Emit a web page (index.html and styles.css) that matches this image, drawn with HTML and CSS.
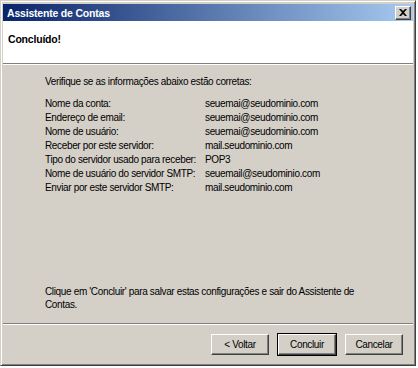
FILE: index.html
```html
<!DOCTYPE html>
<html lang="pt">
<head>
  <meta charset="UTF-8" />
  <title>Assistente de Contas</title>
  <link rel="stylesheet" href="styles.css">
</head>
<body>
  <div class="window">
    <!-- Title Bar -->
    <div class="titlebar">
      <span class="title">Assistente de Contas</span>
      <span class="close-btn">
        <svg width="8" height="7" viewBox="0 0 8 7">
          <path d="M0 0h2l2 2 2-2h2L5 3.5 8 7H6L4 5 2 7H0l3-3.5z" fill="#000"/>
        </svg>
      </span>
    </div>

    <!-- Header -->
    <div class="header">
      <h1>Concluído!</h1>
    </div>

    <!-- Content -->
    <div class="content">
      <p class="intro">Verifique se as informações abaixo estão corretas:</p>
      <div class="summary">
        <span>Nome da conta:</span><span>seuemai@seudominio.com</span>
        <span>Endereço de email:</span><span>seuemai@seudominio.com</span>
        <span>Nome de usuário:</span><span>seuemai@seudominio.com</span>
        <span>Receber por este servidor:</span><span>mail.seudominio.com</span>
        <span>Tipo do servidor usado para receber:</span><span>POP3</span>
        <span>Nome de usuário do servidor SMTP:</span><span>seuemail@seudominio.com</span>
        <span>Enviar por este servidor SMTP:</span><span>mail.seudominio.com</span>
      </div>
      <p class="note">Clique em 'Concluir' para salvar estas configurações e sair do Assistente de Contas.</p>
    </div>

    <!-- Buttons -->
    <div class="footer">
      <button type="button" class="btn">&lt; Voltar</button>
      <button type="button" class="btn btn-default">Concluir</button>
      <button type="button" class="btn">Cancelar</button>
    </div>
  </div>
</body>
</html>
```

FILE: styles.css
```css
body {
  margin: 0;
  background: #fff;
  font-family: 'Liberation Sans', Arial, sans-serif;
  font-size: 10px;
  letter-spacing: -0.35px;
  color: #000;
}

/* Window frame */
.window {
  width: 416px;
  height: 366px;
  box-sizing: border-box;
  background: #d4d0c8;
  border: 1px solid;
  border-color: #d4d0c8 #404040 #404040 #d4d0c8;
  box-shadow: inset 1px 1px 0 #fff, inset -1px -1px 0 #808080;
  padding: 2px;
  display: flex;
  flex-direction: column;
}

.titlebar {
  height: 17px;
  margin-top: 1px;
  flex-shrink: 0;
  background: linear-gradient(90deg, #0a246a, #a6caf0);
  display: flex;
  align-items: center;
  justify-content: space-between;
  padding: 0 2px 0 4px;
}

.title {
  color: #fff;
  font-size: 10.5px;
  font-weight: bold;
  letter-spacing: -0.2px;
}

.close-btn {
  width: 16px;
  height: 14px;
  box-sizing: border-box;
  background: #d4d0c8;
  border: 1px solid;
  border-color: #fff #404040 #404040 #fff;
  box-shadow: inset -1px -1px 0 #808080;
  display: flex;
  align-items: center;
  justify-content: center;
}

/* Header */
.header {
  height: 43px;
  flex-shrink: 0;
  background: #fff;
  border-bottom: 1px solid #808080;
  box-shadow: 0 1px 0 #fff;
  padding: 12px 0 0 5px;
  box-sizing: border-box;
}

.header h1 {
  margin: 0;
  font-size: 10.5px;
  font-weight: bold;
  letter-spacing: -0.2px;
}

/* Content */
.content {
  flex: 1;
  padding: 11px 20px 0 42px;
  display: flex;
  flex-direction: column;
}

.intro {
  margin: 0 0 9px;
  line-height: 13px;
}

.summary {
  display: grid;
  grid-template-columns: 160px auto;
  line-height: 14px;
  white-space: nowrap;
}

.note {
  width: 312px;
  margin: auto 0 12px;
  line-height: 13px;
}

/* Footer */
.footer {
  height: 40px;
  flex-shrink: 0;
  border-top: 1px solid #808080;
  box-shadow: inset 0 1px 0 #fff;
  display: flex;
  justify-content: flex-end;
  align-items: flex-start;
  gap: 9px;
  padding: 10px 10px 0 0;
  box-sizing: border-box;
}

.btn {
  width: 58px;
  height: 21px;
  background: #d4d0c8;
  font-family: 'Liberation Sans', Arial, sans-serif;
  font-size: 10px;
  letter-spacing: -0.35px;
  color: #000;
  border: 1px solid;
  border-color: #fff #404040 #404040 #fff;
  box-shadow: inset -1px -1px 0 #808080;
  padding: 0;
}

.btn-default {
  outline: 1px solid #000;
}
```
